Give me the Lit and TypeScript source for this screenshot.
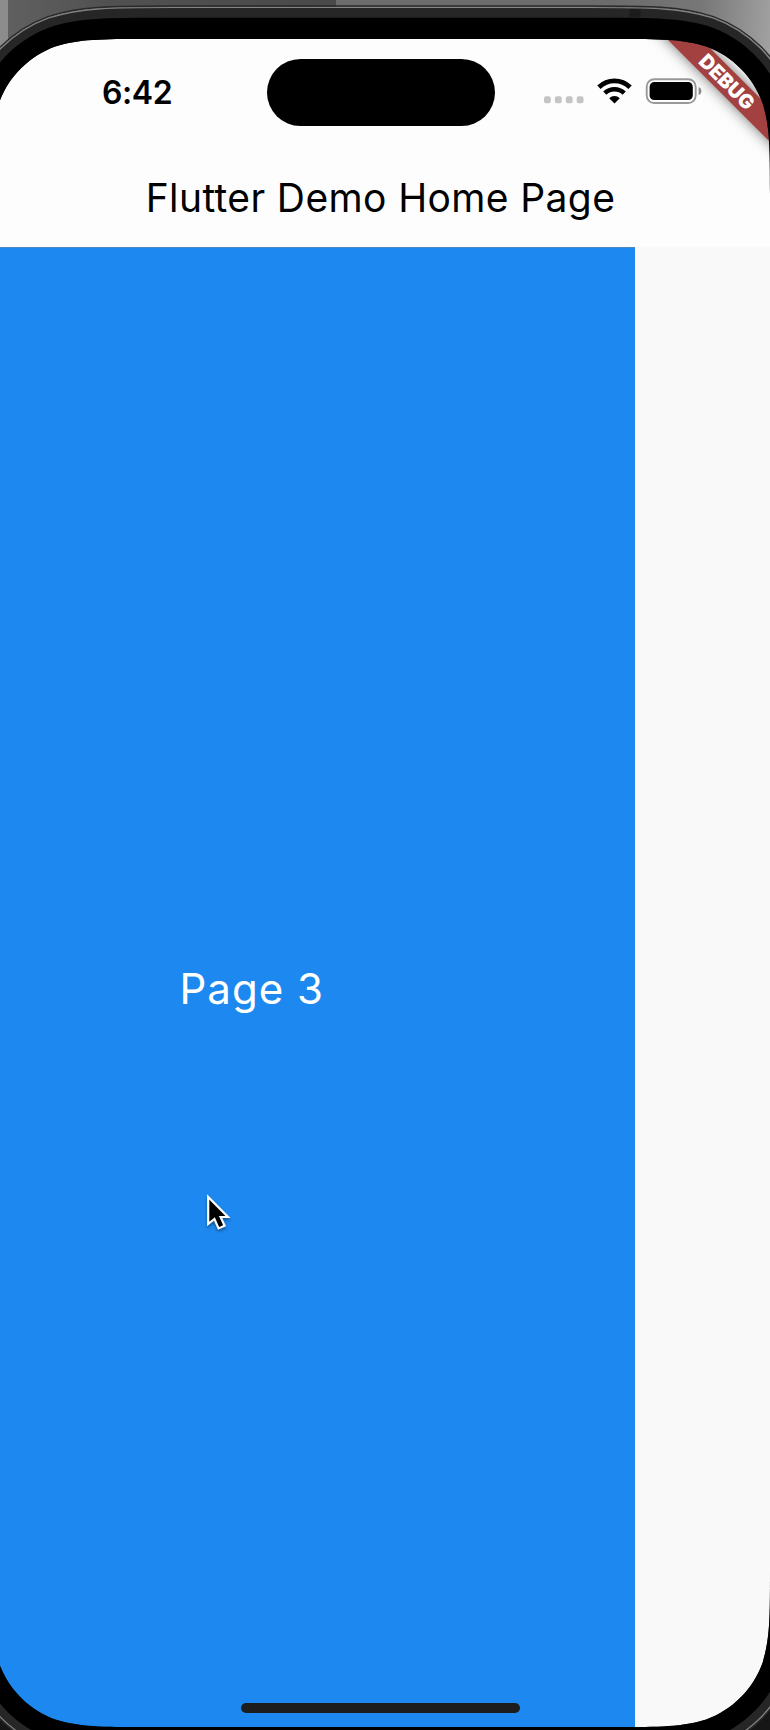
import { LitElement, html, css, svg } from "lit";
import { customElement } from "lit/decorators.js";

// Rounded rectangle with continuous-curvature corners.
function squircle(l: number, t: number, r: number, b: number, q: number): string {
  const a = 1.528665 * q, c = 1.08849 * q, d = 0.868407 * q, e = 0.631494 * q;
  const f = 0.0749114 * q, g = 0.372824 * q, h = 0.16906 * q;
  return [
    `M${l + a} ${t}H${r - a}`,
    `C${r - c} ${t} ${r - d} ${t} ${r - e} ${t + f}`,
    `C${r - g} ${t + h} ${r - h} ${t + g} ${r - f} ${t + e}`,
    `C${r} ${t + d} ${r} ${t + c} ${r} ${t + a}V${b - a}`,
    `C${r} ${b - c} ${r} ${b - d} ${r - f} ${b - e}`,
    `C${r - h} ${b - g} ${r - g} ${b - h} ${r - e} ${b - f}`,
    `C${r - d} ${b} ${r - c} ${b} ${r - a} ${b}H${l + a}`,
    `C${l + c} ${b} ${l + d} ${b} ${l + e} ${b - f}`,
    `C${l + g} ${b - h} ${l + h} ${b - g} ${l + f} ${b - e}`,
    `C${l} ${b - d} ${l} ${b - c} ${l} ${b - a}V${t + a}`,
    `C${l} ${t + c} ${l} ${t + d} ${l + f} ${t + e}`,
    `C${l + h} ${t + g} ${l + g} ${t + h} ${l + e} ${t + f}`,
    `C${l + d} ${t} ${l + c} ${t} ${l + a} ${t}Z`,
  ].join("");
}

const PAGE = "M-60 -60H830V1790H-60Z";
const SCREEN = squircle(-8.5, 39, 770, 1727, 101);
const GLASS = squircle(-29, 17.8, 790.5, 1748, 125);
const BODY = squircle(-40, 7, 801.5, 1759, 140);

@customElement("device-frame")
export class DeviceFrame extends LitElement {
  static styles = css`
    :host { display: block; pointer-events: none; }
    svg { display: block; }
  `;
  render() {
    return html`<svg width="770" height="1730" viewBox="0 0 770 1730">
      <defs>
        <linearGradient id="right" x1="336" y1="0" x2="770" y2="30" gradientUnits="userSpaceOnUse">
          <stop offset="0" stop-color="#6c6c6c" /><stop offset=".65" stop-color="#6c6c6c" />
          <stop offset=".84" stop-color="#777" /><stop offset="1" stop-color="#a0a0a0" />
        </linearGradient>
        <linearGradient id="left" x1="8" y1="0" x2="336" y2="0" gradientUnits="userSpaceOnUse">
          <stop offset="0" stop-color="#606060" /><stop offset=".3" stop-color="#515151" />
          <stop offset="1" stop-color="#494949" />
        </linearGradient>
        <clipPath id="around"><path clip-rule="evenodd" d="${PAGE + BODY}" /></clipPath>
      </defs>
      ${svg`
      <g clip-path="url(#around)">
        <rect width="8" height="60" fill="#8c8c8c" />
        <rect x="8" width="328" height="60" fill="url(#left)" />
        <rect x="336" width="434" height="70" fill="url(#right)" />
        <rect y="1650" width="770" height="80" fill="#161616" />
      </g>
      <path d="${BODY + SCREEN}" fill="#262626" fill-rule="evenodd" />
      <rect x="629.5" y="9" width="11" height="8.5" fill="#1c1c1c" />
      <path d="${GLASS + SCREEN}" fill="#000" fill-rule="evenodd" />
      <path d="${squircle(-41, 6, 802.5, 1760, 141)}" fill="none" stroke="#2a2a2a" stroke-width="1.4" />
      <path d="${squircle(-39.5, 7.5, 801, 1758.5, 139.5)}" fill="none" stroke="#858585" stroke-width="1.2" />
      `}
    </svg>`;
  }
}

@customElement("status-bar")
export class StatusBar extends LitElement {
  static styles = css`
    :host {
      display: grid;
      grid-template-columns: 165px 227.5px 1fr;
      align-items: center;
      height: 107px;
      padding-left: 102px;
    }
    .time { font-size: 32px; font-weight: 600; line-height: 40px; letter-spacing: -0.4px; color: #000; }
    .island { height: 67px; border-radius: 34px; background: #000; }
    .icons { display: flex; align-items: center; padding: 0 0 2.6px 49px; }
    .icons svg { display: block; flex: none; }
    .wifi { margin-left: 13px; }
    .battery { margin-left: 13.5px; }
  `;
  render() {
    return html`
      <div class="time">6:42</div>
      <div class="island"></div>
      <div class="icons">
        <svg width="40" height="26" viewBox="0 0 40 26" fill="#c4c4c4">
          ${[0, 10.9, 21.8, 32.7].map((x) => svg`<rect x="${x}" y="18.3" width="6.8" height="7" rx="2" />`)}
        </svg>
        <svg class="wifi" width="35" height="26" viewBox="0 0 35 26" fill="none" stroke="#000">
          <path d="M1.9 9.2A22.3 22.3 0 0 1 33.1 9.2" stroke-width="4.8" />
          <path d="M7.8 15.2A14 14 0 0 1 27.2 15.2" stroke-width="4.6" />
          <path d="M17.5 25.5L12.2 20.2A7.5 7.5 0 0 1 22.8 20.2Z" fill="#000" stroke="none" />
        </svg>
        <svg class="battery" width="58" height="26" viewBox="0 0 58 26">
          <rect x="1.7" y="1.2" width="49" height="23.8" rx="7.5" fill="none" stroke="#999" stroke-width="1.9" />
          <rect x="4.6" y="4.1" width="43.2" height="18" rx="4.6" fill="#000" />
          <path d="M53.6 9q2.8 1 2.8 4t-2.8 4z" fill="#8c8c8c" />
        </svg>
      </div>
    `;
  }
}

@customElement("app-root")
export class AppRoot extends LitElement {
  static styles = css`
    :host {
      display: block;
      position: relative;
      box-sizing: border-box;
      width: 770px;
      height: 1730px;
      overflow: hidden;
      background: #000;
      font-family: Inter, "Liberation Sans", sans-serif;
    }
    .screen {
      display: flex;
      flex-direction: column;
      box-sizing: border-box;
      height: 1727px;
      padding-top: 39px;
      background: #f9f9f9;
    }
    .top { background: #fdfdfd; height: 208px; flex: none; }
    .bar {
      display: flex;
      justify-content: center;
      align-items: center;
      box-sizing: border-box;
      height: 101px;
      width: 761px;
      padding-top: 2px;
    }
    .title {
      margin: 0;
      font-size: 39px;
      font-weight: 400;
      line-height: 48px;
      letter-spacing: 0.38px;
      color: #000;
      white-space: nowrap;
    }
    .pages { display: flex; flex: 1; }
    .page {
      display: flex;
      align-items: center;
      justify-content: center;
      box-sizing: border-box;
      width: 634.5px;
      padding: 3px 131px 0 0;
      border-top: 1px solid #4c88c0;
      background: #1d89f0;
      color: #fff;
      font-size: 42px;
      line-height: 52px;
      letter-spacing: 1px;
    }
    .banner {
      position: absolute;
      left: 577px;
      top: 70px;
      width: 300px;
      height: 23.7px;
      display: flex;
      align-items: center;
      justify-content: center;
      transform: rotate(45deg);
      background: #a34140;
      box-shadow: 0 0 14px rgba(0, 0, 0, 0.55);
      color: #fff;
      font-size: 19.8px;
      font-weight: 900;
      line-height: 24px;
    }
    .home {
      position: absolute;
      left: 241px;
      top: 1703.3px;
      width: 279px;
      height: 9.4px;
      border-radius: 5px;
      background: #1d1d1d;
    }
    .frame { position: absolute; left: 0; top: 0; }
    .cursor { position: absolute; left: 202px; top: 1191px; overflow: visible; filter: drop-shadow(0 2px 1.5px rgba(0, 0, 0, 0.4)); }
  `;
  render() {
    return html`
      <div class="screen">
        <div class="top">
          <status-bar></status-bar>
          <header class="bar"><h1 class="title">Flutter Demo Home Page</h1></header>
        </div>
        <main class="pages"><section class="page">Page 3</section></main>
      </div>
      <div class="banner">DEBUG</div>
      <div class="home"></div>
      <device-frame class="frame"></device-frame>
      <svg class="cursor" width="32" height="42" viewBox="0 0 32 42">
        <path d="M6.2 6V33L12.4 28L16.6 37.4L22.6 34.8L18.6 26H26Z" fill="#000" stroke="#fff" stroke-width="2.2" />
      </svg>
    `;
  }
}
